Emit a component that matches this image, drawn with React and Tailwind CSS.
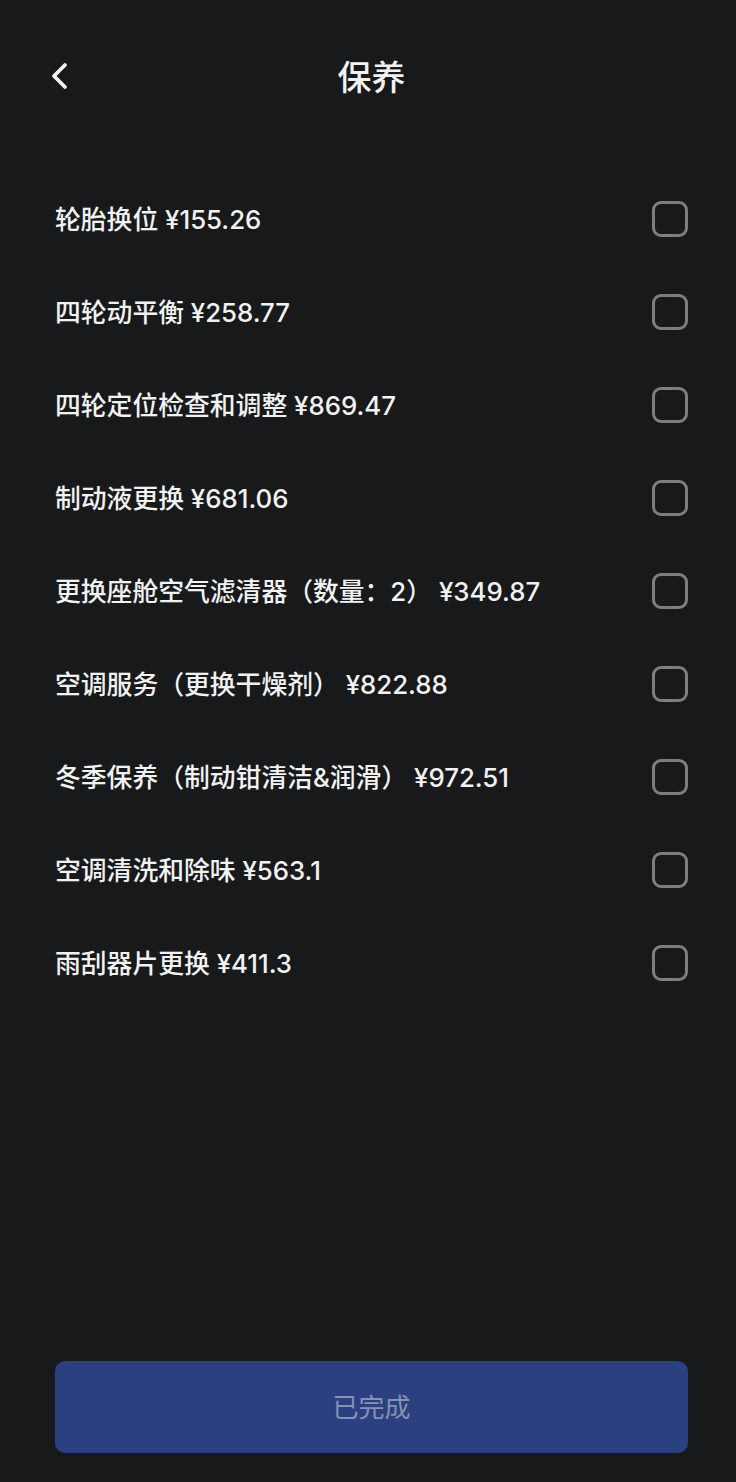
import React, { useState } from 'react'

const items = [
  '轮胎换位 ¥155.26',
  '四轮动平衡 ¥258.77',
  '四轮定位检查和调整 ¥869.47',
  '制动液更换 ¥681.06',
  '更换座舱空气滤清器（数量：2） ¥349.87',
  '空调服务（更换干燥剂） ¥822.88',
  '冬季保养（制动钳清洁&润滑） ¥972.51',
  '空调清洗和除味 ¥563.1',
  '雨刮器片更换 ¥411.3',
]

export default function App(){
  const [checked, setChecked] = useState({})

  return (
    <div className="w-[736px] h-[1482px] bg-[#18191b] flex flex-col text-[#f2f2f2]" style={{ fontFamily: 'Inter, "Noto Sans CJK SC", sans-serif' }}>
      <div className="relative h-[156px] flex items-center justify-center pl-[7px]">
        <button className="absolute left-[48px] top-[61px] w-[22px] h-[30px]">
          <svg width="22" height="30" viewBox="0 0 22 30" fill="none">
            <path d="M17 4 L6 15 L17 26" stroke="#f2f2f2" strokeWidth="3.8" strokeLinecap="round" strokeLinejoin="round" />
          </svg>
        </button>
        <h1 className="text-[34px] font-medium leading-none">保养</h1>
      </div>

      <div className="pt-[16px] pl-[55px] pr-[48px] flex-1">
        {items.map((it, i) => (
          <div key={i} className="h-[93px] flex items-center justify-between">
            <span className="text-[25.8px] leading-none font-medium pt-[3px]">{it}</span>
            <button
              onClick={() => setChecked(p => ({ ...p, [i]: !p[i] }))}
              className="w-[36px] h-[36px] rounded-[9px] border-[3px] border-[#7d7e80]"
            />
          </div>
        ))}
      </div>

      <div className="pl-[55px] pr-[48px] pb-[29px]">
        <button className="w-full h-[92px] rounded-[10px] bg-[#2b4080] text-[#8592b3] text-[26px]">已完成</button>
      </div>
    </div>
  )
}
